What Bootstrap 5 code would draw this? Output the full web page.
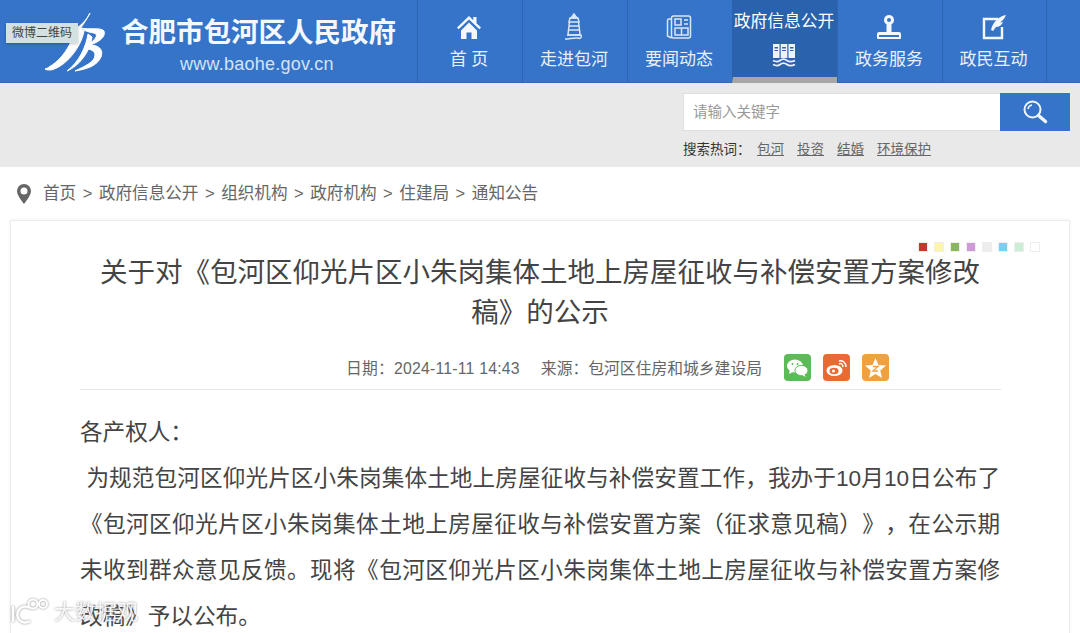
<!DOCTYPE html>
<html lang="zh-CN"><head><meta charset="utf-8"><title>公示</title>
<link href="https://cdn.jsdelivr.net/npm/bootstrap@5.3.0/dist/css/bootstrap.min.css" rel="stylesheet">
<style>
html,body{height:633px;overflow:hidden}
body{background:#fff;font-family:"Liberation Sans","Noto Sans CJK SC",sans-serif;color:#444}
.topbar{height:83px;background:#3574c8;border-bottom:1px solid #2f69b6}
.brand{width:417px;position:relative}
.brand-logo{position:absolute;left:43px;top:12px}
.brand-txt{margin-left:121px;padding-top:14px;color:#fff;text-align:left}
.brand-cn{font-size:27.5px;font-weight:700;line-height:38px;white-space:nowrap;color:#f4f8fd;width:276px}
.brand-url{font-size:18px;line-height:20px;margin-top:2px;margin-left:59px;color:#d4e3f5;font-family:"Liberation Sans",sans-serif;letter-spacing:.25px;white-space:nowrap}
.tipbox{position:absolute;left:6px;top:23px;width:72px;height:20px;background:#d3e2e1;color:#444;font-size:12px;line-height:20px;text-align:center;box-shadow:0 1px 3px rgba(0,0,0,.22);white-space:nowrap}
.navcell{width:105px;height:83px;border-left:1px solid #2c66b3;color:#e9f0fa;font-size:17px;text-align:center;padding:14px 2px 0 0;line-height:22px;white-space:nowrap}
.navcell:last-child{border-right:1px solid #2c66b3;width:105px}
.navcell svg{display:block;margin:0 auto 9px}
.navcell.on{background:#2a62ae;border-bottom:6px solid #a7a7a7;padding-top:11px;font-size:16.8px;color:#fff;border-left-color:#2a62ae}
.navcell.on svg{margin-top:10px}
.searchband{height:84px;background:#e9e9e9;padding:10px 10px 0 0}
.searchbox{width:387px;height:38px}
.sinput{flex:1;background:#fff;border:1px solid #dfdfdf;border-right:0;color:#999;font-size:14.5px;line-height:36px;padding-left:9px}
.sbtn{width:70px;background:#3574c8;display:flex;align-items:center;justify-content:center}
.hotline{width:387px;margin-top:9px;font-size:13.5px;line-height:20px;color:#333;white-space:nowrap}
.hotlabel{width:74px}
.hotlink{color:#666;margin-right:13px;text-decoration:underline}
.crumbs{height:53px;padding:2px 0 0 17px;font-size:16.6px;color:#666;white-space:nowrap}
.crumbs svg{margin:-2px 12px 0 0}
.crumbs i{font-style:normal;margin:0 6.500px}
.paper{margin:0 10px;height:500px;border:1px solid #ececec;border-bottom:0;box-shadow:0 0 4px rgba(0,0,0,.06);padding:0 69px;position:relative}
.swatches{position:absolute;right:29px;top:21px;gap:6px}
.swatches span{width:10px;height:10px;display:block;border:1px solid #eee}
.arttitle{font-size:27.5px;font-weight:400;line-height:40px;text-align:center;padding-top:32px;margin:0 10px;color:#444}
.artmeta{height:31px;margin:26px -1px 0 0;border-bottom:1px solid #e5e5e5;font-size:15.8px;color:#666;padding-right:239px;padding-bottom:10px;white-space:nowrap;position:relative}
.artmeta span+span{margin-left:21px}
.metadate{letter-spacing:.22px}
.shareicons{position:absolute;right:112px;top:-5px;gap:12px}
.shareicons b{width:27px;height:27px;border-radius:4px;display:flex;align-items:center;justify-content:center}
.artbody{font-size:22.6px;line-height:46px;margin:20px 0 0;color:#444;width:920px;text-spacing-trim:space-all;font-feature-settings:"chws" 0,"halt" 0}
.artbody p{margin:0;white-space:nowrap;text-align:justify;text-align-last:justify}
.artbody p.lastline{text-align-last:left}
.wmark{position:absolute;left:10px;top:598px;color:rgba(255,255,255,.88);font-size:21px;line-height:28px;filter:drop-shadow(0 0 1px rgba(110,110,110,.8));white-space:nowrap;display:flex;align-items:center;gap:4px}
</style></head><body>
<header class="topbar d-flex">
  <div class="brand">
    <svg class="brand-logo" width="64" height="60" viewBox="0 0 64 60" fill="#fff" stroke="#fff" stroke-width="1"><path d="M47 1C43 9 37 15 28 19L36 18C40 13 44 7 47 1Z"/><path d="M35 15C32 33 18 52 2 57C3 58 5 58 8 58C22 55 38 36 41 19Z"/><path d="M29 27C24 40 15 50 6 55C16 52 27 42 31 30Z"/><path d="M45 22C43 35 36 50 24 59C36 54 47 40 49 25Z"/><path d="M38 16C46 18 58 15 61 19C63 25 56 30 47 33C55 33 61 37 58 45C54 54 44 57 32 59C42 54 52 50 52 43C52 38 46 37 43 37L42 34C50 30 55 25 53 22C50 20 44 21 38 16Z"/></svg>
    <div class="brand-txt"><div class="brand-cn">合肥市包河区人民政府</div><div class="brand-url">www.baohe.gov.cn</div></div>
    <div class="tipbox">微博二维码</div>
  </div>
  <div class="d-flex">
    <div class="navcell"><svg width="26" height="26" viewBox="0 0 26 26" fill="#f4f7fc"><path d="M13 2 1 13.500l1.600 1.800L13 5.500l10.400 9.800L25 13.500l-4.500-4.300V3h-3.200v3.200z"/><path d="M5 16.500 13 8.500l8 8V25h-5.500v-6.500h-5V25H5z"/></svg>首 页</div>
    <div class="navcell"><svg width="26" height="28" viewBox="0 0 26 28" fill="none" stroke="#d9e6f6" stroke-width="1.500" style="margin-top:-1px;margin-bottom:8px"><path fill="#d9e6f6" d="M13 1 10 5h6z"/><path d="M9 5h8l1 4H8zM8.500 9h9l.5 4H8zM8 13h10l.5 4h-11zM7.500 17h11l.5 5H7z"/><path d="M6 22h14c1 3-1 4-3 3-4-.5-9 1-13 1"/></svg>走进包河</div>
    <div class="navcell"><svg width="26" height="26" viewBox="0 0 26 26" fill="none" stroke="#d9e6f6" stroke-width="1.500"><rect x="5.500" y="2" width="19" height="22" rx="2"/><path d="M5.500 5H3a1.500 1.500 0 0 0-1.500 1.500V22L5.500 24"/><rect x="9" y="5" width="6" height="6"/><path d="M18 6h4M18 10h4M9 14h13v7H9zM15.500 14v7"/></svg>要闻动态</div>
    <div class="navcell on">政府信息公开<svg width="24" height="24" viewBox="0 0 24 24"><path fill="#eef3fb" d="M1 1h6.500v14H1zM8.700 1h6.600v14H8.700zM16.500 1H23v14h-6.500z"/><path fill="#2a62ae" d="M2.500 4h3.500v1.500H2.500zM10.200 4h3.600v1.500h-3.600zM18 4h3.500v1.500H18zM2.500 7h3.500v1H2.500zM10.200 7h3.600v1h-3.600zM18 7h3.500v1H18z"/><path fill="none" stroke="#eef3fb" stroke-width="1.700" d="M1 17.500c3 1.500 5 1.500 7 0s5-1.500 7 0 5 1.500 8 0M1 21.500c3 1.500 5 1.500 7 0s5-1.500 7 0 5 1.500 8 0"/></svg></div>
    <div class="navcell"><svg width="26" height="26" viewBox="0 0 26 26" fill="#f4f7fc"><path fill-rule="evenodd" d="M13 1a5 5 0 0 1 2.500 9.300V18H23a2 2 0 0 1 2 2v4a1 1 0 0 1-1 1H2a1 1 0 0 1-1-1v-4a2 2 0 0 1 2-2h7.500V10.300A5 5 0 0 1 13 1zm0 3a2 2 0 1 0 0 4 2 2 0 0 0 0-4zM3 21v2h20v-2z"/></svg>政务服务</div>
    <div class="navcell"><svg width="26" height="26" viewBox="0 0 26 26" fill="none" stroke="#f4f7fc" stroke-width="2.400"><path d="M17 5H3v19h18V13"/><path fill="#f4f7fc" stroke="none" d="M25 1c-6 1-13 6-15 15l2 1 3-4c3 0 6-2 7-5l-3 .5C22 6 24 4 25 1z"/></svg>政民互动</div>
  </div>
</header>
<section class="searchband d-flex flex-column align-items-end">
  <div class="searchbox d-flex"><div class="sinput">请输入关键字</div><div class="sbtn"><svg width="26" height="26" viewBox="0 0 26 26" fill="none" stroke="#f2f6fc"><circle cx="10.500" cy="10.500" r="8" stroke-width="2"/><path d="M6 10a5 5 0 0 1 4-4" stroke-width="1.500"/><path d="M16.500 16.500l7 6" stroke-width="3.500" stroke-linecap="round"/></svg></div></div>
  <div class="hotline d-flex"><span class="hotlabel">搜索热词：</span><a class="hotlink" href="#">包河</a><a class="hotlink" href="#">投资</a><a class="hotlink" href="#">结婚</a><a class="hotlink" href="#">环境保护</a></div>
</section>
<nav class="crumbs d-flex align-items-center"><svg width="14" height="20" viewBox="0 0 14 20"><path fill-rule="evenodd" fill="#666" d="M7 0a7 7 0 0 1 7 7c0 4-4 9-7 13C4 16 0 11 0 7a7 7 0 0 1 7-7zm0 3.500a3.500 3.500 0 1 0 0 7 3.500 3.500 0 0 0 0-7z"/></svg>首页<i>&gt;</i>政府信息公开<i>&gt;</i>组织机构<i>&gt;</i>政府机构<i>&gt;</i>住建局<i>&gt;</i>通知公告</nav>
<main class="paper">
  <div class="swatches d-flex"><span style="background:#c0392b"></span><span style="background:#fdf6a8"></span><span style="background:#8cb55f"></span><span style="background:#cf9bd6"></span><span style="background:#eceded"></span><span style="background:#74d3f5"></span><span style="background:#cdeed5"></span><span style="background:#fff"></span></div>
  <h1 class="arttitle">关于对《包河区仰光片区小朱岗集体土地上房屋征收与补偿安置方案修改稿》的公示</h1>
  <div class="artmeta d-flex align-items-center justify-content-end"><span class="metadate">日期：2024-11-11 14:43</span><span>来源：包河区住房和城乡建设局</span>
    <div class="shareicons d-flex">
      <b style="background:#5cbb57"><svg width="21" height="18" viewBox="0 0 21 18" fill="#fff"><ellipse cx="8" cy="7" rx="8" ry="6.500"/><ellipse cx="14.500" cy="11.500" rx="6.500" ry="5.200" stroke="#5cbb57"/><path d="M3 11l-1 4 4-2zM17 15l2 3-4-2z"/><circle cx="5.500" cy="5" r="1" fill="#5cbb57"/><circle cx="10.500" cy="5" r="1" fill="#5cbb57"/></svg></b>
      <b style="background:#ea6b32"><svg width="21" height="18" viewBox="0 0 21 18" fill="none"><ellipse cx="8.500" cy="11.500" rx="8" ry="5.500" fill="#fff"/><ellipse cx="8" cy="12" rx="4.500" ry="3.200" fill="#ea6b32"/><circle cx="7.500" cy="12" r="1.500" fill="#fff"/><path d="M13 2c3-1 7 1 7 6M13 5c2-1 4 0 4 3" stroke="#fff" stroke-width="1.500"/></svg></b>
      <b style="background:#f0a03f"><svg width="21" height="20" viewBox="0 0 21 20" fill="#fff"><path d="M10.500 0l3 7 7.500.6-5.700 4.800L17 20l-6.500-4L4 20l1.700-7.600L0 7.600 7.500 7z"/><path d="M8 8.500h5l-5 4.500h5" fill="none" stroke="#f0a03f" stroke-width="1.300"/></svg></b>
    </div>
  </div>
  <div class="artbody">
    <p class="lastline">各产权人：</p>
    <p>&nbsp;为规范包河区仰光片区小朱岗集体土地上房屋征收与补偿安置工作，我办于10月10日公布了</p>
    <p>《包河区仰光片区小朱岗集体土地上房屋征收与补偿安置方案（征求意见稿）》，在公示期</p>
    <p>未收到群众意见反馈。现将《包河区仰光片区小朱岗集体土地上房屋征收与补偿安置方案修</p>
    <p class="lastline">改稿》予以公布。</p>
  </div>
</main>
<div class="wmark"><svg width="40" height="28" viewBox="0 0 40 28" fill="none" stroke="#fff" stroke-width="2.500"><path d="M3 8v16"/><path d="M20 10a8 8 0 1 0 0 13"/><circle cx="23" cy="6" r="4.500" stroke-width="2"/><circle cx="33" cy="6" r="4" stroke-width="2"/></svg><span>大数据观</span></div>
</body></html>
